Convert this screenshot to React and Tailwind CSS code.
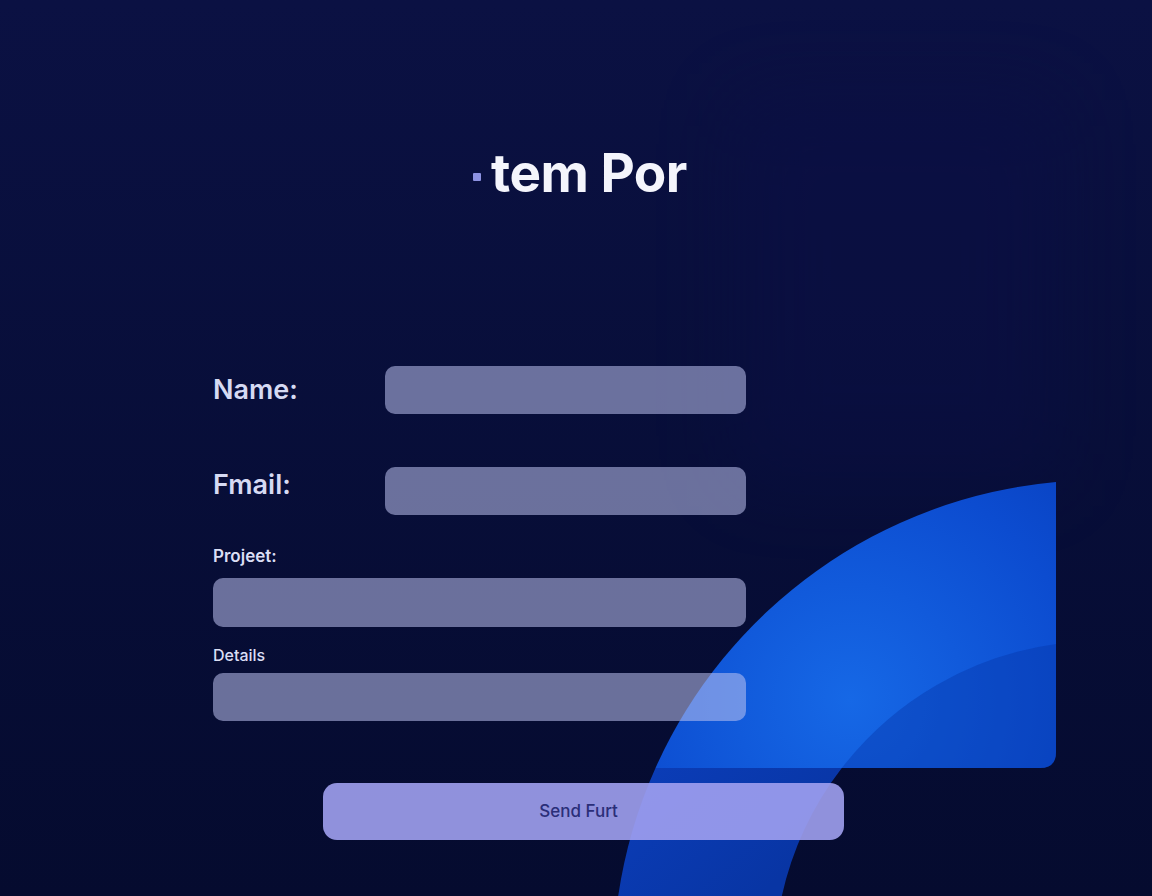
import React from 'react';

const fieldClass = 'h-[48px] rounded-[10px] bg-[rgba(190,195,240,0.55)]';

function BlueShape() {
  // decorative arc + card in the lower right
  return (
    <svg className="absolute inset-0 pointer-events-none" width="1152" height="896" viewBox="0 0 1152 896">
      <defs>
        <radialGradient id="glow" cx="850" cy="700" r="420" gradientUnits="userSpaceOnUse">
          <stop offset="0" stopColor="#1668e6" />
          <stop offset="0.55" stopColor="#0c4cd0" />
          <stop offset="1" stopColor="#0638b4" />
        </radialGradient>
        <linearGradient id="ring" x1="640" y1="760" x2="760" y2="896" gradientUnits="userSpaceOnUse">
          <stop offset="0" stopColor="#0b3db8" />
          <stop offset="1" stopColor="#0835a4" />
        </linearGradient>
      </defs>
      {/* ring below the card */}
      <path fill="url(#ring)" d="M655.5 768 A487 487 0 0 0 618.2 896 H781.8 A326 326 0 0 1 841.8 768 Z" />
      {/* card */}
      <path fill="url(#glow)" d="M655.5 768 A487 487 0 0 1 1056 482 V752 Q1056 768 1040 768 Z" />
      {/* inner circle inside the card */}
      <path fill="#0434a8" opacity="0.4" d="M841.8 768 A326 326 0 0 1 1056 644 V752 Q1056 768 1040 768 Z" />
    </svg>
  );
}

export default function App() {
  return (
    <div
      className="relative h-[896px] w-full overflow-hidden bg-gradient-to-b from-[#0b1143] to-[#050b2f]"
      style={{ fontFamily: 'Inter, "Noto Sans", sans-serif' }}
    >
      <div className="absolute right-[96px] top-[100px] h-[380px] w-[320px] bg-[#0d0f4a] opacity-30 blur-2xl" />
      <BlueShape />

      <div className="relative flex flex-col">
        {/* Title */}
        <div className="mt-[143px] flex items-center justify-center gap-[10px] pl-[8px]">
          <span className="mt-[8px] h-[8px] w-[8px] rounded-[1px] bg-[#8d92e2]" />
          <h1 className="text-[53px] font-bold leading-[60px] tracking-[-0.5px] text-[#f4f5fc]">tem Por</h1>
        </div>

        {/* Form */}
        <div className="ml-[213px] mt-[163px] flex w-[533px] flex-col">
          <div className="flex items-center">
            <label className="w-[172px] text-[27px] font-semibold text-[#d6daf3]">Name:</label>
            <div className={`${fieldClass} w-[361px]`} />
          </div>
          <div className="mt-[53px] flex items-center">
            <label className="-mt-[12px] w-[172px] text-[27px] font-semibold text-[#d6daf3]">Fmail:</label>
            <div className={`${fieldClass} w-[361px]`} />
          </div>

          <label className="mt-[29px] text-[17px] font-semibold leading-[24px] text-[#dadef4]">Projeet:</label>
          <div className={`${fieldClass} mt-[10px] h-[49px] w-[533px]`} />

          <label className="mt-[16px] text-[16px] font-medium leading-[24px] text-[#dadef4]">Details</label>
          <div className={`${fieldClass} mt-[6px] w-[533px]`} />
        </div>

        {/* Button */}
        <button className="ml-[323px] mt-[62px] flex h-[57px] w-[521px] items-center justify-center rounded-[14px] bg-[rgba(160,160,240,0.9)] pr-[10px] text-[17px] font-medium text-[#2a2e78]">
          Send Furt
        </button>
      </div>
    </div>
  );
}
